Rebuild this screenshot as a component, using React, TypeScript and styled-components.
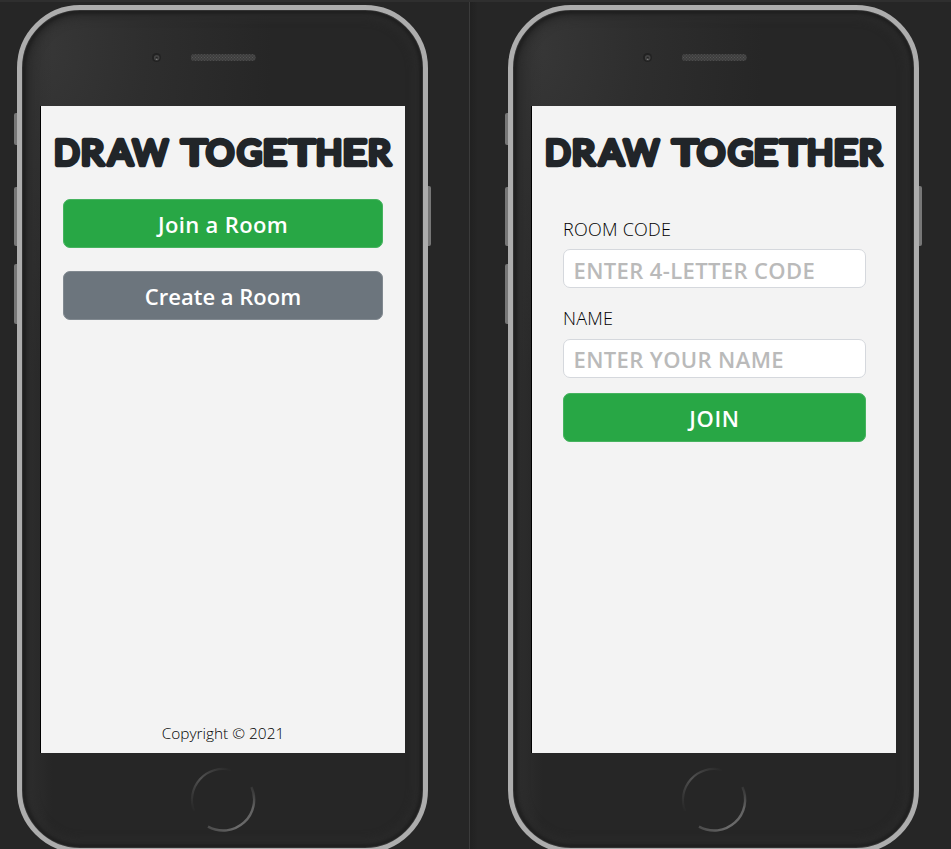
import React from 'react';
import styled, { createGlobalStyle, css } from 'styled-components';

const GlobalStyle = createGlobalStyle`
  *, *::before, *::after { box-sizing: border-box; }
  body {
    margin: 0;
    background: #262626;
    color: #212529;
    font-family: 'Open Sans', 'Noto Sans', sans-serif;
  }
`;

const Desk = styled.main`
  display: grid;
  grid-template-columns: 470px 1fr;
  width: 951px;
  height: 849px;
  overflow: hidden;
  border-top: 2px solid #2f2f2f;
  background: #262626;
`;

const Pane = styled.section<{ $divided?: boolean; $inset: number }>`
  min-width: 0;
  height: 847px;
  padding: 3px 0 0 ${(p) => p.$inset}px;
  overflow: hidden;
  ${(p) =>
    p.$divided
      ? css`border-right: 1px solid #3b3b3b;`
      : css`background: linear-gradient(90deg, #212121, #262626 8px);`}
`;

const Phone = styled.div`
  position: relative;
  width: 411px;
  height: 848px;
  padding: 0 18px;
  border: 5px solid #adadad;
  border-radius: 63px;
  background:
    linear-gradient(90deg, #303030, #26262600 30px),
    radial-gradient(ellipse 230px 330px at 20px 40px, #373737 0, #2e2e2e 45%, #262626 100%);
  box-shadow:
    inset 0 0 1px 0.5px #444,
    inset 0 0 3px 4px #202020,
    inset 0 0 8px 8px #2b2b2b;
`;

const SideKey = styled.span<{ $side: 'left' | 'right'; $top: number; $height: number }>`
  position: absolute;
  ${(p) => p.$side}: -8px;
  top: ${(p) => p.$top}px;
  width: 3px;
  height: ${(p) => p.$height}px;
  border-radius: ${(p) => (p.$side === 'left' ? '2px 0 0 2px' : '0 2px 2px 0')};
  background: #777;
`;

const Earpiece = styled.header`
  display: flex;
  height: 96px;
  padding: 41px 0 0 107px;

  svg { display: block; width: 110px; height: 14px; }
`;

const Screen = styled.div`
  display: flex;
  flex-direction: column;
  width: 365px;
  height: 647px;
  border-left: 1px solid #000;
  background: #f3f3f3;
`;

const HomeArea = styled.footer`
  display: flex;
  justify-content: center;
  padding-top: 13px;

  svg { display: block; width: 68px; height: 68px; }
`;

const Title = styled.h1`
  height: 93px;
  margin: 0;

  svg { display: block; width: 364px; height: 93px; }
  text {
    font: 400 34px Lato, sans-serif;
    fill: #212529;
    stroke: #212529;
    stroke-width: 4.4px;
    stroke-linejoin: round;
    stroke-linecap: round;
  }
`;

const Menu = styled.nav`
  display: flex;
  flex-direction: column;
  flex: 1;
  gap: 23px;
  padding: 0 22px;
`;

const Form = styled.form`
  display: flex;
  flex-direction: column;
  padding: 17px 30px 0 31px;
`;

const Button = styled.button<{ $tone: 'go' | 'muted'; $spacing?: number }>`
  width: 100%;
  height: 49px;
  padding: 0;
  border: 1px solid ${(p) => (p.$tone === 'go' ? '#46b35f' : '#818990')};
  border-radius: 7px;
  background: ${(p) => (p.$tone === 'go' ? '#28a745' : '#6c757d')};
  color: #fff;
  font: 600 22px/30px 'Open Sans', sans-serif;
  letter-spacing: ${(p) => p.$spacing ?? 0}px;
`;

const Label = styled.label`
  height: 33px;
  padding-top: 1px;
  color: #000;
  font-size: 18px;
  font-weight: 350;
  line-height: 24px;
  letter-spacing: 0.25px;
`;

const Input = styled.input`
  width: 100%;
  height: 39px;
  margin-bottom: 17px;
  padding: 2px 10px 0 9.5px;
  border: 1px solid #d5d8dd;
  border-radius: 7px;
  background: #fff;
  font: 600 22px/30px 'Open Sans', sans-serif;
  letter-spacing: 0.38px;

  &::placeholder { color: #bababa; opacity: 1; }
  &:last-of-type { margin: 1px 0 15px; padding-top: 0; }
`;

const Copyright = styled.p`
  margin: 0;
  padding-bottom: 7px;
  color: #000;
  font-size: 15.4px;
  font-weight: 350;
  line-height: 24px;
  text-align: center;
`;

/* [letter, left edge, advance width] */
const LETTERS: [string, number, number][] = [
  ['D', 13, 25.6],
  ['R', 39.8, 23.2],
  ['A', 67.1, 24.8],
  ['W ', 91.8, 42],
  ['T', 140.4, 25.4],
  ['O', 165, 28.2],
  ['G', 196, 25],
  ['E', 221.6, 24.2],
  ['T', 248.4, 25.4],
  ['H', 274.8, 26.6],
  ['E', 301.6, 24.2],
  ['R', 326.7, 23],
];

const DrawTogether = () => (
  <Title>
    <svg viewBox="0 0 364 93" role="img" aria-label="DRAW TOGETHER">
      <text y="58.5" xmlSpace="preserve">
        {LETTERS.map(([letter, x, width], i) => (
          <tspan
            key={i}
            x={x}
            {...(letter === 'W ' ? {} : { textLength: width, lengthAdjust: 'spacingAndGlyphs' })}
          >
            {letter}
          </tspan>
        ))}
      </text>
    </svg>
  </Title>
);

const Speaker = ({ id }: { id: string }) => (
  <svg viewBox="0 0 110 14">
    <defs>
      <pattern id={id} width="3" height="3" patternUnits="userSpaceOnUse">
        <rect width="3" height="3" fill="#3e3e3e" />
        <rect width="1" height="1" fill="#575757" />
        <rect x="1.5" y="1.5" width="1" height="1" fill="#575757" />
      </pattern>
    </defs>
    <circle cx="9.5" cy="6.5" r="4.5" fill="#222" />
    <circle cx="9.7" cy="6.7" r="2.8" fill="#444" />
    <circle cx="9.7" cy="6.9" r="1.1" fill="#232323" />
    <circle cx="9.7" cy="8.3" r="0.8" fill="#858585" />
    <rect x="44" y="3.3" width="64.5" height="6.4" rx="2.5" fill={`url(#${id})`} />
  </svg>
);

const HomeKey = ({ id }: { id: string }) => (
  <svg viewBox="0 0 68 68" fill="none">
    <defs>
      <linearGradient id={`${id}-a`} x1="0" y1="1" x2="1" y2="0">
        <stop offset="0" stopColor="#262626" />
        <stop offset="0.5" stopColor="#515151" />
        <stop offset="1" stopColor="#262626" />
      </linearGradient>
      <linearGradient id={`${id}-b`} x1="0" y1="1" x2="1" y2="0">
        <stop offset="0" stopColor="#484848" />
        <stop offset="0.35" stopColor="#6c6c6c" />
        <stop offset="0.75" stopColor="#626262" />
        <stop offset="1" stopColor="#303030" />
      </linearGradient>
    </defs>
    <path d="M5 45A31 31 0 0 1 42 4" stroke={`url(#${id}-a)`} strokeWidth="2.2" />
    <path d="M19 60.6A31 31 0 0 0 62.5 21" stroke={`url(#${id}-b)`} strokeWidth="2.4" />
  </svg>
);

const Device = ({ id, children }: { id: string; children: React.ReactNode }) => (
  <Phone>
    <SideKey $side="left" $top={103} $height={32} />
    <SideKey $side="left" $top={177} $height={59} />
    <SideKey $side="left" $top={254} $height={60} />
    <SideKey $side="right" $top={176} $height={60} />
    <Earpiece><Speaker id={`${id}-mesh`} /></Earpiece>
    <Screen>{children}</Screen>
    <HomeArea><HomeKey id={`${id}-home`} /></HomeArea>
  </Phone>
);

export default function App() {
  return (
    <>
      <GlobalStyle />
      <Desk>
        <Pane $divided $inset={17}>
          <Device id="lobby">
            <DrawTogether />
            <Menu>
              <Button $tone="go" $spacing={0.35}>Join a Room</Button>
              <Button $tone="muted">Create a Room</Button>
            </Menu>
            <Copyright>Copyright © 2021</Copyright>
          </Device>
        </Pane>
        <Pane $inset={38}>
          <Device id="join">
            <DrawTogether />
            <Form onSubmit={(e) => e.preventDefault()}>
              <Label htmlFor="code">ROOM CODE</Label>
              <Input id="code" placeholder="ENTER 4-LETTER CODE" />
              <Label htmlFor="name">NAME</Label>
              <Input id="name" placeholder="ENTER YOUR NAME" />
              <Button $tone="go" $spacing={0.6}>JOIN</Button>
            </Form>
          </Device>
        </Pane>
      </Desk>
    </>
  );
}
